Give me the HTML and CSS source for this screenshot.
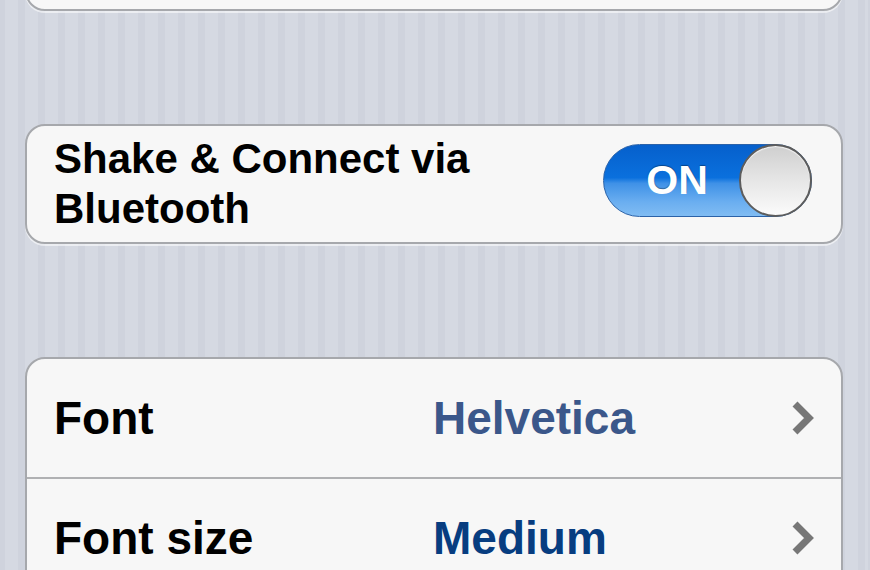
FILE: index.html
```html
<!DOCTYPE html>
<html>
<head>
<meta charset="utf-8">
<link rel="stylesheet" href="styles.css">
</head>
<body>
<div class="page">
  <div class="card card-top"></div>

  <div class="card">
    <div class="toggle-row">
      <div class="toggle-label">Shake &amp; Connect via<br>Bluetooth</div>
      <div class="switch">
        <span class="switch-on">ON</span>
        <span class="switch-knob"></span>
      </div>
    </div>
  </div>

  <div class="card">
    <div class="nav-row">
      <span class="nav-label">Font</span>
      <span class="nav-value value-light">Helvetica</span>
      <svg class="chevron" width="24" height="36" viewBox="0 0 24 36"><path d="M5 4 L19 18 L5 32" fill="none" stroke="#777" stroke-width="7" stroke-linejoin="miter"/></svg>
    </div>
    <div class="separator"></div>
    <div class="nav-row">
      <span class="nav-label">Font size</span>
      <span class="nav-value value-dark">Medium</span>
      <svg class="chevron" width="24" height="36" viewBox="0 0 24 36"><path d="M5 4 L19 18 L5 32" fill="none" stroke="#777" stroke-width="7" stroke-linejoin="miter"/></svg>
    </div>
  </div>
</div>
</body>
</html>
```

FILE: styles.css
```css
html, body {
  margin: 0;
  padding: 0;
  height: 100%;
  overflow: hidden;
}

body {
  background-color: #d4d8e1;
  background-image: repeating-linear-gradient(90deg, #cfd3dd 0 7px, #d5d9e2 7px 20px);
  background-position: -2px 0;
  font-family: "Liberation Sans", Arial, Helvetica, sans-serif;
  font-weight: bold;
  color: #000;
}

.page {
  display: flex;
  flex-direction: column;
  gap: 113px;
  padding: 0 27px 0 25px;
}

.card {
  background: #f7f7f7;
  border: 2px solid #a6a8ac;
  border-radius: 20px;
  box-shadow: 0 2px 0 rgba(255, 255, 255, 0.55);
  overflow: hidden;
  flex-shrink: 0;
}

.card-top {
  height: 116px;
  margin-top: -109px;
}

.toggle-row {
  height: 116px;
  box-sizing: border-box;
  display: flex;
  align-items: center;
  justify-content: space-between;
  padding: 0 29px 4px 27px;
}

.toggle-label {
  font-size: 42px;
  line-height: 50px;
  margin-top: 4px;
}

.switch {
  width: 209px;
  height: 73px;
  box-sizing: border-box;
  border-radius: 37px;
  border: 1px solid #2b62a8;
  background: linear-gradient(180deg, #0660cc 0%, #0a70dd 46%, #3f91e7 54%, #6aaef0 80%, #80bcf3 100%);
  display: flex;
  align-items: center;
  position: relative;
  margin-bottom: 3px;
}

.switch-on {
  width: 140px;
  text-align: center;
  color: #fff;
  font-size: 41px;
  line-height: 1;
  text-shadow: 0 -1px 1px rgba(0, 0, 0, 0.35);
  padding-left: 6px;
  box-sizing: border-box;
}

.switch-knob {
  position: absolute;
  right: -1px;
  top: -1px;
  width: 73px;
  height: 73px;
  box-sizing: border-box;
  border-radius: 50%;
  border: 2px solid #5d5d5d;
  background: linear-gradient(180deg, #cfcfcf 0%, #e6e6e6 50%, #fbfbfb 100%);
  box-shadow: inset 0 1px 1px rgba(255, 255, 255, 0.8);
}

.nav-row {
  height: 118px;
  display: grid;
  grid-template-columns: 379px 1fr 24px;
  align-items: center;
  padding: 0 27px 0 27px;
}

.nav-label,
.nav-value {
  font-size: 46px;
  line-height: 1;
}

.value-light {
  color: #3b578a;
}

.value-dark {
  color: #073d80;
}

.chevron {
  display: block;
}

.separator {
  height: 2px;
  background: #b0b1b3;
}
```
